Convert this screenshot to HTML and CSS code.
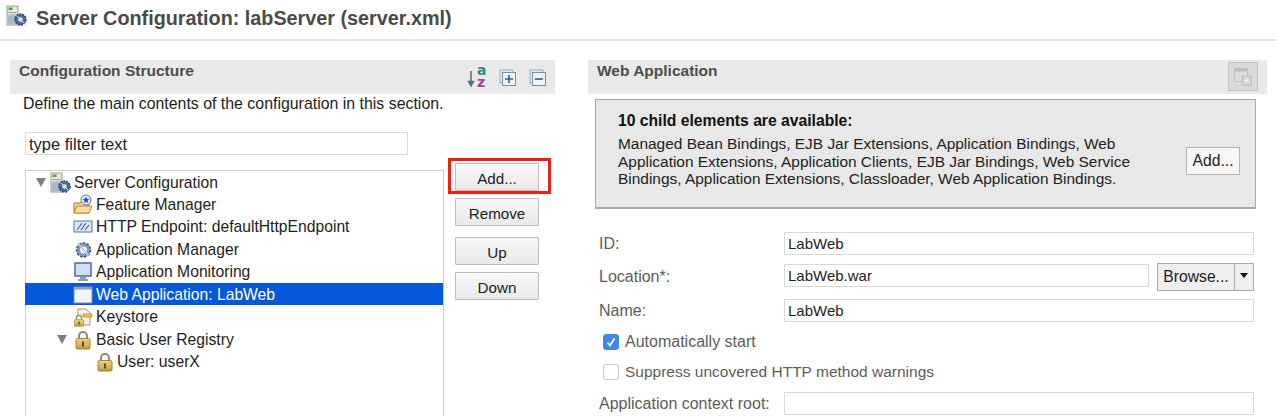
FILE: index.html
```html
<!DOCTYPE html>
<html lang="en">
<head>
<meta charset="utf-8">
<title>Server Configuration</title>
<link rel="stylesheet" href="styles.css">
</head>
<body>
<svg class="defs" width="0" height="0" aria-hidden="true">
  <defs>
    <linearGradient id="gold" x1="0" y1="0" x2="0" y2="1"><stop offset="0" stop-color="#f3dc8e"/><stop offset="1" stop-color="#c2943a"/></linearGradient>
    <linearGradient id="folder" x1="0" y1="0" x2="0" y2="1"><stop offset="0" stop-color="#fbe3ae"/><stop offset="1" stop-color="#eeb45c"/></linearGradient>
    <symbol id="lock" viewBox="0 0 18 20">
      <path d="M5 9V6a4 4 0 0 1 8 0v3" fill="none" stroke="#8d8a7c" stroke-width="2"/>
      <rect x="2" y="8.5" width="14" height="10.5" rx="1.5" fill="url(#gold)" stroke="#a9822f"/>
      <path d="M3 11h12M3 13.5h12M3 16h12" stroke="#d9b760" stroke-width=".8"/>
      <rect x="8" y="11.5" width="2" height="5" fill="#5d4a1f"/>
    </symbol>
    <symbol id="server" viewBox="0 0 22 22">
      <rect x="1" y="1" width="11" height="19" fill="#e6e8de" stroke="#9aa08f"/>
      <rect x="2.500" y="2.500" width="4" height="2.500" fill="#4aa24a"/>
      <path d="M2.500 7.500h8M2.500 10h8" stroke="#9aa08f"/>
      <rect x="2" y="11" width="9" height="8" fill="#a9b9cd"/>
      <circle cx="14.500" cy="14.500" r="5.500" fill="#4d6c96" stroke="#2e4a70" stroke-width="1.500" stroke-dasharray="2 1"/>
      <circle cx="14.500" cy="14.500" r="2.200" fill="#dce6f0"/>
      <path d="M10.500 10.500l8 8" stroke="#dce6f0"/>
    </symbol>
  </defs>
</svg>

<header class="page-header">
  <svg class="header-icon" width="22" height="22"><use href="#server"/></svg>
  <h1>Server Configuration: labServer (server.xml)</h1>
</header>

<main class="columns">
  <section class="left-col">
    <div class="section-bar">
      <h2>Configuration Structure</h2>
      <div class="bar-tools">
        <svg class="sort-icon" width="22" height="24" viewBox="0 0 22 24">
          <path d="M6 6v14M3.500 16.500L6 21l2.500-4.500z" stroke="#5f6b77" stroke-width="1.5" fill="#5f6b77"/>
          <text x="12" y="10" class="az az-a">a</text>
          <text x="12" y="22" class="az az-z">z</text>
        </svg>
        <svg width="18" height="18" viewBox="0 0 18 18">
          <rect x="1" y="1" width="13" height="13" fill="#dfe8f0" stroke="#9db0c2"/>
          <rect x="3.5" y="3.5" width="13" height="13" fill="#eef3f7" stroke="#6f8fab"/>
          <path d="M10 6v8M6 10h8" stroke="#27608f" stroke-width="1.6"/>
        </svg>
        <svg width="18" height="18" viewBox="0 0 18 18">
          <rect x="1" y="1" width="13" height="13" fill="#dfe8f0" stroke="#9db0c2"/>
          <rect x="3.5" y="3.5" width="13" height="13" fill="#eef3f7" stroke="#6f8fab"/>
          <path d="M6 10h8" stroke="#27608f" stroke-width="1.6"/>
        </svg>
      </div>
    </div>
    <p class="intro">Define the main contents of the configuration in this section.</p>
    <div class="filter-row"><div class="field filter">type filter text</div></div>

    <div class="structure">
      <div class="tree">
        <div class="row root"><span class="twist open"></span><svg class="ti" width="22" height="22"><use href="#server"/></svg><span>Server Configuration</span></div>
        <div class="row l1">
          <svg class="ti" width="22" height="22" viewBox="0 0 22 22">
            <path d="M2 19V9h6l2-2h7v12z" fill="url(#folder)" stroke="#a87c34"/>
            <path d="M2 19l3-7h15l-3 7z" fill="#f9dc9f" stroke="#b98a3e"/>
            <circle cx="14" cy="6" r="5" fill="#e8eef8" stroke="#5572a8"/>
            <path d="M14 2.5l1 2.3 2.4.2-1.8 1.6.6 2.4-2.2-1.3-2.2 1.3.6-2.4L10.600 5l2.400-.2z" fill="#2d50a0"/>
          </svg>
          <span>Feature Manager</span>
        </div>
        <div class="row l1">
          <svg class="ti" width="22" height="22" viewBox="0 0 22 22">
            <rect x="2" y="5" width="18" height="11" fill="#dfe7f3" stroke="#5777a8"/>
            <path d="M5 14l5-7M9 14l5-7M13 14l4-5" stroke="#44659a" stroke-width="1.200"/>
          </svg>
          <span>HTTP Endpoint: defaultHttpEndpoint</span>
        </div>
        <div class="row l1">
          <svg class="ti" width="22" height="22" viewBox="0 0 22 22">
            <circle cx="11.500" cy="11" r="7" fill="#7f97b8" stroke="#39557d" stroke-width="1.500" stroke-dasharray="2.500 1.500"/>
            <circle cx="11.500" cy="11" r="3.500" fill="#eef3f8"/>
            <path d="M6 4l11 13" stroke="#eef3f8" stroke-width="1.800"/>
            <path d="M6 4l11 13" stroke="#4b5f7a" stroke-width=".6"/>
          </svg>
          <span>Application Manager</span>
        </div>
        <div class="row l1">
          <svg class="ti" width="22" height="22" viewBox="0 0 22 22">
            <rect x="3" y="2" width="16" height="13" fill="#cfe0f2" stroke="#52688a" stroke-width="1.500"/>
            <path d="M8 17h6M6 19h10" stroke="#6c7f98" stroke-width="1.500"/>
          </svg>
          <span>Application Monitoring</span>
        </div>
        <div class="row l1 selected">
          <svg class="ti" width="22" height="22" viewBox="0 0 22 22">
            <rect x="2" y="3" width="18" height="16" fill="#f2f6fb" stroke="#7c8ea6"/>
            <rect x="2" y="3" width="18" height="2.500" fill="#8ba0bb"/>
          </svg>
          <span>Web Application: LabWeb</span>
        </div>
        <div class="row l1">
          <svg class="ti" width="22" height="22" viewBox="0 0 22 22">
            <path d="M6 9V3h8l4 4v12h-7" fill="#f7f2df" stroke="#a99c70"/>
            <path d="M11 8h9v3h-9z" fill="#e9c04a" stroke="#a4822b" stroke-width=".6"/>
            <use href="#lock" x="1" y="8" width="12" height="13"/>
          </svg>
          <span>Keystore</span>
        </div>
        <div class="row l1 branch"><span class="twist open"></span><svg class="ti" width="22" height="22"><use href="#lock" x="2" y="1" width="18" height="20"/></svg><span>Basic User Registry</span></div>
        <div class="row l2"><svg class="ti" width="22" height="22"><use href="#lock" x="2" y="1" width="18" height="20"/></svg><span>User: userX</span></div>
      </div>

      <div class="buttons">
        <div class="highlight"></div>
        <button class="btn">Add...</button>
        <button class="btn">Remove</button>
        <button class="btn spaced">Up</button>
        <button class="btn">Down</button>
      </div>
    </div>
  </section>

  <section class="right-col">
    <div class="section-bar">
      <h2>Web Application</h2>
      <div class="ghost-btn">
        <svg width="20" height="20" viewBox="0 0 20 20">
          <rect x="1.500" y="1.500" width="13" height="13" fill="#dcdcdc" stroke="#c2c2c2"/>
          <rect x="1.500" y="1.500" width="13" height="3" fill="#bdbdbd"/>
          <rect x="9" y="9" width="9.500" height="9.500" fill="#d2d2d2" stroke="#bfbfbf"/>
          <path d="M13.700 11v5M11.200 13.500h5" stroke="#f0f0f0" stroke-width="1.400"/>
        </svg>
      </div>
    </div>

    <div class="children-box">
      <div class="children-text">
        <h3>10 child elements are available:</h3>
        <p>Managed Bean Bindings, EJB Jar Extensions, Application Bindings, Web<br>Application Extensions, Application Clients, EJB Jar Bindings, Web Service<br>Bindings, Application Extensions, Classloader, Web Application Bindings.</p>
      </div>
      <button class="btn-small">Add...</button>
    </div>

    <div class="form">
      <label class="lbl">ID:</label>
      <div class="field value">LabWeb</div>

      <label class="lbl">Location*:</label>
      <div class="with-browse">
        <div class="field value grow">LabWeb.war</div>
        <div class="browse"><span class="browse-main">Browse...</span><span class="browse-arrow"></span></div>
      </div>

      <label class="lbl">Name:</label>
      <div class="field value">LabWeb</div>

      <div class="check-row first">
        <span class="check on"><svg width="16" height="16" viewBox="0 0 16 16"><path d="M4.500 8.500l2.500 3 4.500-7" fill="none" stroke="#fff" stroke-width="1.800"/></svg></span>
        <span>Automatically start</span>
      </div>
      <div class="check-row second">
        <span class="check"></span>
        <span>Suppress uncovered HTTP method warnings</span>
      </div>

      <label class="lbl">Application context root:</label>
      <div class="field value"></div>
    </div>
  </section>
</main>
</body>
</html>
```

FILE: styles.css
```css
* { box-sizing: border-box; }
html, body { margin: 0; padding: 0; height: 416px; overflow: hidden; background: #fff; }
body { font-family: "Liberation Sans", Arial, sans-serif; font-size: 15.700px; color: #1d1d1d; }
.defs { display: block; height: 0; }

.page-header { height: 41px; border-bottom: 2px solid #e8e8e8; display: flex; align-items: center; padding: 0 0 2px 6px; gap: 8px; }
.header-icon { flex: none; margin-top: -6px; }
h1 { margin: 0; font-size: 19.800px; font-weight: bold; color: #4a4a4a; }

.columns { display: flex; padding: 19px 0 0 10px; gap: 33px; }
.left-col { width: 545px; flex: none; }
.right-col { width: 679px; flex: none; }

.section-bar { height: 34px; background: #e9e9e9; display: flex; justify-content: space-between; padding: 2px 9px 0; }
h2 { margin: 0; font-size: 15.500px; line-height: 18px; font-weight: bold; color: #4d4d4d; }
.bar-tools { display: flex; gap: 12px; align-items: flex-start; padding-top: 3px; margin-right: -1px; }
.bar-tools svg:nth-child(2), .bar-tools svg:nth-child(3) { margin-top: 4px; }
.sort-icon { overflow: visible; }
.az { font-family: "DejaVu Sans", sans-serif; font-weight: bold; font-size: 14px; }
.az-a { fill: #2e8b78; }
.az-z { fill: #a0429a; }

.intro { margin: 0; padding: 1px 0 0 13px; height: 38px; line-height: 18px; font-size: 15.900px; white-space: nowrap; }
.filter-row { padding-left: 15px; }
.field { height: 23px; border: 1px solid #d9d9d9; background: #fff; line-height: 22px; padding-left: 3px; color: #222; font-size: 16.500px; }
.field.value { font-size: 15px; }
.filter { width: 383px; }

.structure { display: flex; margin-top: 15px; padding-left: 15px; }
.tree { width: 419px; height: 260px; flex: none; border: 1px solid #cdcdcd; border-bottom: 0; }
.row { height: 22.500px; display: flex; align-items: center; white-space: nowrap; margin-left: -1px; padding-top: 2px; }
.row.root { padding-left: 25px; margin-top: -1px; padding-top: 3px; }
.row.l1 { padding-left: 48px; }
.row.l1.branch { padding-left: 32px; }
.row.l2 { padding-left: 69px; }
.ti { flex: none; margin-right: 1px; }
.row.root .ti { margin-right: 2px; }
.row.l1 .ti { margin-left: -1px; margin-right: 2px; }
.row.l2 .ti { margin-left: 0; }
.twist { flex: none; width: 0; height: 0; margin-left: -14px; margin-right: 4px; border-left: 5.500px solid transparent; border-right: 5.500px solid transparent; border-top: 9px solid #7f7f7f; }
.row.l1.branch .twist { margin-left: 0; margin-right: 6px; }
.row.selected { background: #0558dc; color: #fff; }

.buttons { flex: none; width: 84px; margin-left: 11px; margin-top: -7px; display: flex; flex-direction: column; gap: 7px; position: relative; }
.btn { width: 84px; height: 28px; padding: 2px 0 0; font: inherit; font-size: 15.200px; color: #222; border: 1.500px solid #bdbdbd; background: linear-gradient(#f8f8f8, #e9e9e9); border-radius: 1px; }
.btn.spaced { margin-top: 4px; }
.highlight { position: absolute; left: -7px; top: -5px; width: 103px; height: 36px; border: 3px solid #f01e14; }

.children-box { margin: 5px 11px 0 7px; height: 110px; background: #e8e8e8; border: 1px solid #a8a8a8; border-bottom-width: 2px; display: flex; align-items: flex-start; padding: 12px 15px 0 22px; justify-content: space-between; }
h3 { margin: 0 0 5px; font-size: 15.700px; line-height: 18px; font-weight: bold; color: #111; }
.children-text p { margin: 0; font-size: 15.450px; line-height: 17.500px; color: #222; white-space: nowrap; }
.btn-small { flex: none; width: 54px; height: 28px; margin-top: 35px; padding: 0; font: inherit; color: #222; background: #f7f7f7; border: 1px solid #b4b4b4; }

.form { margin-top: 23px; padding: 0 13px 0 11px; display: grid; grid-template-columns: 185px 1fr; row-gap: 9px; align-items: center; color: #5c5c5c; }
.lbl { color: #5c5c5c; font-size: 16px; white-space: nowrap; }
.with-browse { display: flex; align-items: flex-start; height: 26px; }
.grow { flex: 1; }
.browse { display: flex; flex: none; width: 97px; height: 28px; margin: -1px 0 0 8px; border: 1.500px solid #a9a9a9; background: #efefef; color: #222; }
.browse-main { width: 77px; text-align: center; line-height: 25px; border-right: 1.500px solid #a9a9a9; }
.browse-arrow { flex: none; width: 0; height: 0; margin: 9px 0 0 5px; border-left: 4.500px solid transparent; border-right: 4.500px solid transparent; border-top: 5px solid #111; }
.check-row { grid-column: 1 / -1; display: flex; align-items: center; gap: 6px; padding-left: 4px; height: 20px; }
.check-row.first { margin-top: 1px; font-size: 16px; }
.check-row.second { margin: 1px 0; font-size: 15.500px; }
.check { flex: none; width: 16px; height: 16px; border-radius: 3px; border: 1px solid #c8c8c8; background: #fff; display: block; }
.check.on { background: #3e86f0; border-color: #3e86f0; }
.check svg { display: block; margin: -1px; }
.ghost-btn { width: 30px; height: 29px; background: #d9d9d9; border: 1px solid #c4c4c4; display: flex; align-items: center; justify-content: center; }
```
